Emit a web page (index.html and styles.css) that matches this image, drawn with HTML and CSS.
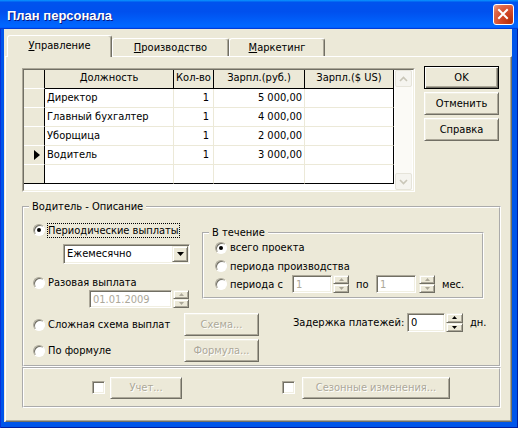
FILE: index.html
```html
<!DOCTYPE html>
<html>
<head>
<meta charset="utf-8">
<title>План персонала</title>
<link rel="stylesheet" href="styles.css">
</head>
<body>
<div class="window">
  <div class="titlebar">
    <span class="title">План персонала</span>
    <span class="close"><svg width="19" height="19" viewBox="0 0 19 19"><path d="M5 5L13 13M13 5L5 13" stroke="#fff" stroke-width="2" stroke-linecap="square"/></svg></span>
  </div>
  <div class="frame">
    <div class="client">
      <div class="tabs">
        <div class="tab active w1"><u>У</u>правление</div>
        <div class="tab w2"><u>П</u>роизводство</div>
        <div class="tab w3"><u>М</u>аркетинг</div>
      </div>
      <div class="panel">
        <div class="toprow">
          <div class="grid">
            <div class="grid-in">
              <div class="table">
                <div class="c i"></div><div class="c h">Должность</div><div class="c h">Кол-во</div><div class="c h">Зарпл.(руб.)</div><div class="c h u">Зарпл.($ US)</div>
                <div class="c i"></div><div class="c">Директор</div><div class="c r k">1</div><div class="c r">5 000,00</div><div class="c u"></div>
                <div class="c i"></div><div class="c">Главный бухгалтер</div><div class="c r k">1</div><div class="c r">4 000,00</div><div class="c u"></div>
                <div class="c i"></div><div class="c">Уборщица</div><div class="c r k">1</div><div class="c r">2 000,00</div><div class="c u"></div>
                <div class="c i cur"><svg width="6" height="10" viewBox="0 0 6 10"><path d="M0 0L6 5L0 10Z" fill="#000"/></svg></div><div class="c">Водитель</div><div class="c r k">1</div><div class="c r">3 000,00</div><div class="c u"></div>
                <div class="c i last"></div><div class="c last"></div><div class="c last"></div><div class="c last"></div><div class="c u last"></div>
              </div>
              <div class="vscroll">
                <span class="sbtn"><svg width="9" height="6" viewBox="0 0 9 6"><path d="M1 5L4.5 1.5L8 5" fill="none" stroke="#c9c6b8" stroke-width="1.6"/></svg></span>
                <span class="sbtn"><svg width="9" height="6" viewBox="0 0 9 6"><path d="M1 1L4.5 4.5L8 1" fill="none" stroke="#c9c6b8" stroke-width="1.6"/></svg></span>
              </div>
            </div>
          </div>
          <div class="btncol">
            <div class="btn default">OK</div>
            <div class="btn">Отменить</div>
            <div class="btn">Справка</div>
          </div>
        </div>

        <fieldset class="group g1">
          <legend>Водитель - Описание</legend>
          <div class="rowA">
            <div class="colA">
              <div class="opt o1"><span class="radio on"></span><span class="focus">Периодические выплаты</span></div>
              <div class="combo"><span class="combo-text">Ежемесячно</span><span class="combo-btn raised"><svg width="7" height="4" viewBox="0 0 7 4"><path d="M0 0H7L3.5 4Z" fill="#000"/></svg></span></div>
              <div class="opt o2"><span class="radio"></span>Разовая выплата</div>
              <div class="date">
                <span class="edit dis-text de">01.01.2009</span>
                <span class="spin">
                  <span class="raised"><svg width="5" height="3" viewBox="0 0 5 3"><path d="M0 3H5L2.5 0Z" fill="#aca899"/></svg></span>
                  <span class="raised"><svg width="5" height="3" viewBox="0 0 5 3"><path d="M0 0H5L2.5 3Z" fill="#aca899"/></svg></span>
                </span>
              </div>
            </div>
            <fieldset class="group g2">
              <legend>В течение</legend>
              <div class="opt p1"><span class="radio on"></span>всего проекта</div>
              <div class="opt p2"><span class="radio"></span>периода производства</div>
              <div class="opt p3">
                <span class="lbl"><span class="radio"></span>периода с</span>
                <span class="edit dis-text pe">1</span>
                <span class="spin s1">
                  <span class="raised"><svg width="5" height="3" viewBox="0 0 5 3"><path d="M0 3H5L2.5 0Z" fill="#aca899"/></svg></span>
                  <span class="raised"><svg width="5" height="3" viewBox="0 0 5 3"><path d="M0 0H5L2.5 3Z" fill="#aca899"/></svg></span>
                </span>
                <span class="po">по</span>
                <span class="edit dis-text pe">1</span>
                <span class="spin s2">
                  <span class="raised"><svg width="5" height="3" viewBox="0 0 5 3"><path d="M0 3H5L2.5 0Z" fill="#aca899"/></svg></span>
                  <span class="raised"><svg width="5" height="3" viewBox="0 0 5 3"><path d="M0 0H5L2.5 3Z" fill="#aca899"/></svg></span>
                </span>
                <span class="mes">мес.</span>
              </div>
            </fieldset>
          </div>
          <div class="rowB">
            <div class="colB">
              <div class="opt"><span class="radio"></span>Сложная схема выплат</div>
              <div class="btn dis">Схема...</div>
              <div class="opt"><span class="radio"></span>По формуле</div>
              <div class="btn dis">Формула...</div>
            </div>
            <div class="delay">
              <span class="delay-lbl">Задержка платежей:</span>
              <span class="edit ze">0</span>
              <span class="spin s3">
                <span class="raised"><svg width="5" height="3" viewBox="0 0 5 3"><path d="M0 3H5L2.5 0Z" fill="#000"/></svg></span>
                <span class="raised"><svg width="5" height="3" viewBox="0 0 5 3"><path d="M0 0H5L2.5 3Z" fill="#000"/></svg></span>
              </span>
              <span class="dn">дн.</span>
            </div>
          </div>
        </fieldset>

        <div class="group g3">
          <span class="check"></span>
          <div class="btn dis b-uchet">Учет...</div>
          <span class="check c2"></span>
          <div class="btn dis b-season">Сезонные изменения...</div>
        </div>
      </div>
    </div>
  </div>
</div>
</body>
</html>
```
FILE: styles.css
```css
* { box-sizing: border-box; }
html, body { margin: 0; padding: 0; }
body {
  width: 518px;
  height: 428px;
  overflow: hidden;
  font-family: "DejaVu Sans Condensed", "DejaVu Sans", sans-serif;
  font-size: 11px;
  color: #000;
  background: #0055ea;
}

/* ---------- window chrome ---------- */
.window {
  width: 518px;
  height: 428px;
  display: flex;
  flex-direction: column;
  background: #0055ea;
  box-shadow: inset 1px 0 #0831d9, inset -1px -1px #001ea0;
}
.titlebar {
  flex: none;
  height: 29px;
  display: flex;
  align-items: center;
  justify-content: space-between;
  padding: 0 4px 0 7px;
  background: linear-gradient(180deg, #0997ff, #0053ee 8%, #0050ee 40%, #06f 88%, #06f 93%, #005bff 95%, #003dd7 96%, #003dd7);
}
.title {
  color: #fff;
  font-family: "Liberation Sans", sans-serif;
  font-weight: bold;
  font-size: 13px;
  padding-top: 2px;
  text-shadow: 1px 1px #0a1883;
}
.close {
  width: 21px;
  height: 21px;
  border: 1px solid #fff;
  border-radius: 3px;
  background: radial-gradient(circle at 85% 85%, #b8300c 0%, #d4492a 45%, #e06a4a 75%, #f0a58e 100%);
  display: flex;
  align-items: center;
  justify-content: center;
}
.frame {
  flex: 1;
  display: flex;
  padding: 0 6px 6px 4px;
}
.client {
  flex: 1;
  display: flex;
  flex-direction: column;
  background: #ece9d8;
  padding-left: 1px;
}

/* ---------- tabs ---------- */
.tabs {
  flex: none;
  height: 27px;
  display: flex;
  align-items: flex-end;
  padding-left: 2px;
  position: relative;
  z-index: 1;
}
.tab {
  height: 18px;
  border: 1px solid;
  border-bottom: 0;
  border-color: #fff #716f64 transparent #fff;
  border-radius: 3px 3px 0 0;
  box-shadow: inset -1px 0 #aca899;
  background: #ece9d8;
  text-align: center;
  line-height: 13px;
  padding-top: 2px;
  white-space: nowrap;
}
.tab.active {
  height: 22px;
  margin-bottom: -1px;
  padding-top: 3px;
}
.w1 { width: 105px; }
.w2 { width: 117px; }
.w3 { width: 96px; }

.panel {
  flex: 1;
  display: flex;
  flex-direction: column;
  border: 1px solid;
  border-color: #fff #716f64 #716f64 #fff;
  box-shadow: inset -1px -1px #aca899;
  padding-left: 16px;
}

/* ---------- grid ---------- */
.toprow {
  display: flex;
  align-items: flex-start;
}
.grid {
  margin-top: 11px;
  width: 393px;
  height: 124px;
  border: 1px solid;
  border-color: #aca899 #fff #fff #aca899;
}
.grid-in {
  height: 100%;
  display: flex;
  background: #fff;
  border: 1px solid;
  border-color: #716f64 #f1efe2 #f1efe2 #716f64;
}
.table {
  width: 370px;
  display: grid;
  grid-template-columns: 21px 129px 40px 91px 89px;
  grid-auto-rows: 19px;
  align-content: start;
}
.c {
  border-right: 1px solid #ece9d8;
  border-bottom: 1px solid #ece9d8;
  padding: 0 2px;
  line-height: 18px;
  white-space: nowrap;
  overflow: hidden;
}
.c.h {
  background: #ece9d8;
  border-color: #000;
  text-align: center;
  padding: 0;
  line-height: 15px;
}
.c.i {
  background: #ece9d8;
  border-right-color: #000;
  border-bottom-color: #fff;
  display: flex;
  align-items: center;
  justify-content: center;
  padding: 0 0 0 5px;
}
.c.r { text-align: right; padding-right: 2px; }
.c.k { padding-right: 4px; }
.c.u { border-right-color: #000; }
.c.last { border-bottom-color: #000; }

.vscroll {
  width: 17px;
  margin-left: 1px;
  display: flex;
  flex-direction: column;
  justify-content: space-between;
  background: #fbfaf6;
}
.sbtn {
  height: 17px;
  display: flex;
  align-items: center;
  justify-content: center;
  border: 1px solid #e6e4da;
  border-radius: 2px;
  background: #f5f4ef;
}

/* ---------- buttons ---------- */
.btncol {
  margin: 9px 0 0 9px;
  display: flex;
  flex-direction: column;
  gap: 3px;
}
.btn {
  width: 75px;
  height: 23px;
  display: flex;
  align-items: center;
  justify-content: center;
  background: #ece9d8;
  border: 1px solid;
  border-color: #fff #716f64 #716f64 #fff;
  box-shadow: inset 1px 1px #f1efe2, inset -1px -1px #aca899;
  white-space: nowrap;
}
.btn.default {
  border-color: #000;
  box-shadow: inset 1px 1px #fff, inset -1px -1px #716f64, inset -2px -2px #aca899;
}
.btn.dis, .dis {
  color: #aca899;
  text-shadow: 1px 1px #fff;
}
.raised {
  background: #ece9d8;
  border: 1px solid;
  border-color: #f1efe2 #716f64 #716f64 #f1efe2;
  box-shadow: inset 1px 1px #fff, inset -1px -1px #aca899;
  display: flex;
  align-items: center;
  justify-content: center;
}

/* ---------- group boxes ---------- */
.group {
  margin: 0;
  padding: 0;
  min-width: 0;
  border: 2px groove #fff;
}
legend {
  padding: 0 3px;
  margin-left: 5px;
  line-height: 13px;
}
.g1 {
  margin-top: 8px;
  width: 479px;
  height: 167px;
}
.rowA {
  display: flex;
  align-items: flex-start;
  margin-top: 9px;
  padding-left: 9px;
}
.colA {
  width: 169px;
  flex: none;
  display: flex;
  flex-direction: column;
}
.opt {
  display: flex;
  align-items: center;
  height: 16px;
  white-space: nowrap;
}
.radio {
  flex: none;
  width: 12px;
  height: 12px;
  margin-right: 3px;
  border-radius: 50%;
  background: #fff;
  border: 1px solid;
  border-color: #aca899 #fff #fff #aca899;
  box-shadow: inset 1px 1px #716f64;
  display: flex;
  align-items: center;
  justify-content: center;
}
.radio.on::after {
  content: "";
  width: 4px;
  height: 4px;
  border-radius: 50%;
  background: #000;
}
.o1 .radio { margin-right: 2px; }
.focus {
  outline: 1px dotted #000;
  outline-offset: -1px;
  padding: 1px 1px;
  line-height: 13px;
}
.combo {
  margin: 6px 0 0 30px;
  width: 127px;
  height: 20px;
  display: flex;
  background: #fff;
  border: 1px solid;
  border-color: #aca899 #fff #fff #aca899;
  box-shadow: inset 1px 1px #716f64, inset -1px -1px #f1efe2;
  padding: 1px;
}
.combo-text {
  flex: 1;
  padding-left: 2px;
  line-height: 16px;
}
.combo-btn { width: 16px; }
.o2 { margin-top: 11px; height: 15px; }
.date {
  display: flex;
  margin-left: 56px;
  height: 18px;
}
.edit {
  background: #fff;
  border: 1px solid;
  border-color: #aca899 #fff #fff #aca899;
  box-shadow: inset 1px 1px #716f64, inset -1px -1px #f1efe2;
  padding: 0 3px;
  display: flex;
  align-items: center;
}
.dis-text { color: #aca899; }
.de { width: 83px; }
.spin {
  flex: none;
  width: 16px;
  margin-left: 1px;
  display: flex;
  flex-direction: column;
}
.spin .raised { flex: 1; }

.g2 {
  margin-top: 4px;
  width: 282px;
  height: 73px;
}
.g2 .opt { margin-left: 11px; }
.p1 { height: 17px; }
.p2 { height: 18px; margin-top: 1px; }
.p3 { height: 18px; }
.lbl { width: 77px; display: flex; align-items: center; }
.pe { width: 40px; height: 18px; }
.s1 { height: 18px; }
.po { width: 27px; padding-left: 7px; }
.s2 { height: 18px; margin-left: 3px; }
.mes { margin-left: 7px; }

.rowB {
  display: flex;
  align-items: flex-start;
  margin-top: 5px;
  padding-left: 9px;
}
.colB {
  display: grid;
  grid-template-columns: 151px 75px;
  grid-template-rows: 23px 23px;
  row-gap: 3px;
  align-items: center;
}
.delay {
  margin-left: 34px;
  display: flex;
  align-items: center;
  height: 19px;
}
.delay-lbl { width: 114px; }
.ze { width: 38px; height: 19px; }
.s3 { height: 19px; width: 17px; margin-left: 1px; }
.dn { margin-left: 7px; }

.g3 {
  width: 479px;
  height: 41px;
  display: flex;
  align-items: center;
  padding: 0 0 0 68px;
}
.check {
  flex: none;
  width: 13px;
  height: 13px;
  background: #fff;
  border: 1px solid;
  border-color: #aca899 #fff #fff #aca899;
  box-shadow: inset 1px 1px #716f64, inset -1px -1px #f1efe2;
}
.b-uchet { width: 72px; height: 22px; margin-left: 5px; }
.c2 { margin-left: 100px; }
.b-season { width: 148px; height: 22px; margin-left: 7px; }
```
